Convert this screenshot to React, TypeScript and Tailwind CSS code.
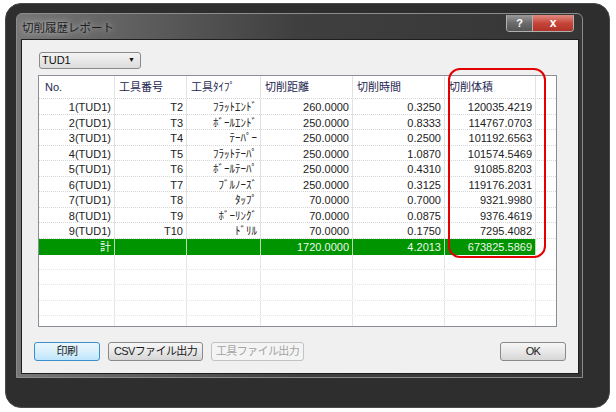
import React from 'react';

const rows = [
  ['1(TUD1)', 'T2', 'ﾌﾗｯﾄｴﾝﾄﾞ', '260.0000', '0.3250', '120035.4219'],
  ['2(TUD1)', 'T3', 'ﾎﾞｰﾙｴﾝﾄﾞ', '250.0000', '0.8333', '114767.0703'],
  ['3(TUD1)', 'T4', 'ﾃｰﾊﾟｰ', '250.0000', '0.2500', '101192.6563'],
  ['4(TUD1)', 'T5', 'ﾌﾗｯﾄﾃｰﾊﾟ', '250.0000', '1.0870', '101574.5469'],
  ['5(TUD1)', 'T6', 'ﾎﾞｰﾙﾃｰﾊﾟ', '250.0000', '0.4310', '91085.8203'],
  ['6(TUD1)', 'T7', 'ﾌﾞﾙﾉｰｽﾞ', '250.0000', '0.3125', '119176.2031'],
  ['7(TUD1)', 'T8', 'ﾀｯﾌﾟ', '70.0000', '0.7000', '9321.9980'],
  ['8(TUD1)', 'T9', 'ﾎﾞｰﾘﾝｸﾞ', '70.0000', '0.0875', '9376.4619'],
  ['9(TUD1)', 'T10', 'ﾄﾞﾘﾙ', '70.0000', '0.1750', '7295.4082'],
];

const total = ['計', '', '', '1720.0000', '4.2013', '673825.5869'];
const headers = ['No.', '工具番号', '工具ﾀｲﾌﾟ', '切削距離', '切削時間', '切削体積'];

const cols = 'grid grid-cols-[76px_72px_74px_92px_92px_91px_1fr]';

const Button = ({ label, focused, disabled, w }: { label: string; focused?: boolean; disabled?: boolean; w: string }) => (
  <div
    className={`${w} flex h-[19px] items-center justify-center rounded-[3px] border text-[11px] tracking-[-0.6px] ${
      focused
        ? 'border-[#3c8fc8] bg-gradient-to-b from-[#eaf6fd] via-[#d9f0fc] to-[#bee6fd] text-[#1a1a1a]'
        : disabled
        ? 'border-[#bfc3c6] bg-[#f4f4f4] text-[#a3a3a3]'
        : 'border-[#8a8a8a] bg-gradient-to-b from-[#f6f6f6] via-[#e8e8e8] to-[#d6d6d6] text-[#1a1a1a]'
    }`}
  >
    {label}
  </div>
);

export default function App() {
  return (
    <div
      className="relative h-[412px] w-[616px] overflow-hidden bg-white"
      style={{ fontFamily: '"Liberation Sans", "Noto Sans CJK JP", sans-serif' }}
    >
      <div className="ml-[5px] mt-[3px] h-[405px] w-[605px] rounded-[16px] border border-[#4a4a4a] bg-[#2e2e2e] pl-[10px] pt-[9px]">
        {/* window */}
        <div className="h-[365px] w-[567px] rounded-t-[6px] border border-[#8c8c8c] bg-gradient-to-r from-[#777] via-[#3f3f3f] to-[#363636] px-[4px]">
          {/* title bar */}
          <div className="flex h-[25px] items-start justify-between">
            <div className="mt-[6px] pl-[1px] text-[11.5px] text-[#1e1e1e] [text-shadow:0_0_6px_rgba(255,255,255,0.8)]">
              切削履歴レポート
            </div>
            <div className="mr-[4px] mt-[1px] flex h-[17px] overflow-hidden rounded-b-[4px] border border-t-0 border-[#b0b0b0]">
              <div className="flex w-[25px] items-center justify-center bg-gradient-to-b from-[#9a9a9a] via-[#6c6c6c] to-[#555] text-[11px] font-bold text-white">
                ?
              </div>
              <div className="flex w-[41px] items-center justify-center border-l border-[#b0b0b0] bg-gradient-to-b from-[#e08a80] via-[#c7453a] to-[#b03328] text-[12px] font-bold text-white">
                x
              </div>
            </div>
          </div>
          {/* client */}
          <div className="h-[335px] w-[558px] border border-[#1e1e1e] bg-[#f0f0f0]">
            {/* dropdown */}
            <div className="ml-[17px] mt-[12px] flex h-[17px] w-[102px] items-center justify-between rounded-[3px] border border-[#8a8a8a] bg-gradient-to-b from-[#f4f4f4] to-[#dcdcdc] pl-[2px] pr-[5px] text-[11px] text-[#111]">
              <span>TUD1</span>
              <span className="text-[7px]">▼</span>
            </div>
            {/* table */}
            <div className="ml-[16px] mt-[6px] h-[252px] w-[519px] overflow-hidden border border-[#8a8f96] bg-white text-[11px]">
              <div className={`${cols} h-[23px] items-center border-b border-dotted border-[#d6d6d6] text-[#1c2750]`}>
                {headers.map((h, i) => (
                  <div key={h} className={`flex h-full items-center border-r border-[#e2e2e2] ${i === 0 ? 'pl-[6px]' : 'pl-[4px]'}`}>
                    {h}
                  </div>
                ))}
                <div />
              </div>
              {rows.map((r) => (
                <div key={r[0]} className={`${cols} h-[15.5px] border-b border-dotted border-[#d6d6d6] text-[#222]`}>
                  {r.map((c, i) => (
                    <div key={i} className="flex h-full items-center justify-end border-r border-[#e2e2e2] pr-[3px]">
                      {c}
                    </div>
                  ))}
                  <div />
                </div>
              ))}
              <div className={`${cols} h-[15.5px] text-[#eef7ee]`}>
                {total.map((c, i) => (
                  <div key={i} className="flex h-full items-center justify-end border-r border-[#b8deb8] bg-[#009400] pr-[3px]">
                    {c}
                  </div>
                ))}
                <div />
              </div>
              {[0, 1, 2, 3, 4].map((k) => (
                <div key={k} className={`${cols} h-[15.5px] border-b border-dotted border-[#e6e6e6]`}>
                  {[0, 1, 2, 3, 4, 5].map((i) => (
                    <div key={i} className="h-full border-r border-[#e6e6e6]" />
                  ))}
                  <div />
                </div>
              ))}
            </div>
            {/* buttons */}
            <div className="ml-[12px] mr-[12px] mt-[15px] flex items-center">
              <Button label="印刷" focused w="w-[66px]" />
              <div className="w-[8px]" />
              <Button label="CSVファイル出力" w="w-[95px]" />
              <div className="w-[8px]" />
              <Button label="工具ファイル出力" disabled w="w-[93px]" />
              <div className="flex-1" />
              <Button label="OK" w="w-[66px]" />
            </div>
          </div>
        </div>
      </div>
      {/* red annotation */}
      <div className="absolute left-[448px] top-[68px] h-[190px] w-[98px] rounded-[12px] border-2 border-[#e20000]" />
    </div>
  );
}
